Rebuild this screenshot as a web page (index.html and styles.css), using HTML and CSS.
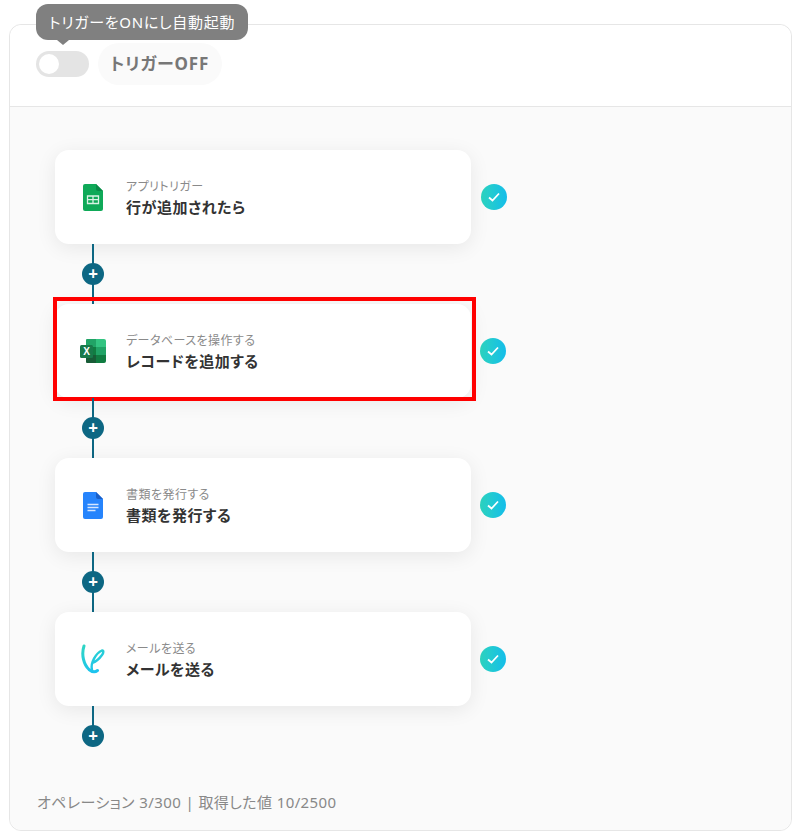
FILE: index.html
```html
<!DOCTYPE html>
<html lang="ja">
<head>
  <meta charset="UTF-8">
  <title>フロー</title>
  <link rel="stylesheet" href="styles.css">
</head>
<body>
  <div class="panel">
    <!-- HEADER -->
    <div class="panel-head">
      <div class="toggle"><span class="knob"></span></div>
      <div class="status">トリガーOFF</div>
      <div class="tooltip">トリガーをONにし自動起動</div>
    </div>

    <!-- FLOW -->
    <div class="panel-body">
      <div class="flow">
        <div class="step step-first">
          <div class="card">
            <div class="app-icon">
              <svg viewBox="0 0 20 27" width="20" height="27">
                <path d="M2 0H13L20 7V25a2 2 0 0 1-2 2H2a2 2 0 0 1-2-2V2a2 2 0 0 1 2-2Z" fill="#0fa958"/>
                <path d="M13 0L20 7H15a2 2 0 0 1-2-2Z" fill="#0a8a48"/>
                <path d="M4.500 12H15.500V19.500H4.500Z" fill="none" stroke="#d9f2e4" stroke-width="1.300"/>
                <path d="M10 12V19.500M4.500 15.700H15.500" stroke="#d9f2e4" stroke-width="1.300"/>
              </svg>
            </div>
            <div class="card-text">
              <div class="card-sub">アプリトリガー</div>
              <div class="card-title">行が追加されたら</div>
            </div>
          </div>
          <svg class="check" viewBox="0 0 26 26" width="26" height="26"><use href="#check"/></svg>
        </div>
        <div class="link"><span class="plus">+</span></div>

        <div class="step">
          <div class="card">
            <div class="app-icon">
              <svg viewBox="0 0 26 24" width="26" height="24">
                <path d="M6 1a1 1 0 0 1 1-1H16V8H6Z" fill="#21a366"/>
                <path d="M16 0H24a2 2 0 0 1 2 2V8H16Z" fill="#33c481"/>
                <path d="M6 8H16V16H6Z" fill="#107c41"/>
                <path d="M16 8H26V16H16Z" fill="#21a366"/>
                <path d="M6 16H16V24H7a1 1 0 0 1-1-1Z" fill="#185c37"/>
                <path d="M16 16H26V22a2 2 0 0 1-2 2H16Z" fill="#107c41"/>
                <rect x="0" y="6" width="13" height="13" rx="1.500" fill="#18794a"/>
                <text class="excel-x" x="6.500" y="16.300" text-anchor="middle">X</text>
              </svg>
            </div>
            <div class="card-text">
              <div class="card-sub">データベースを操作する</div>
              <div class="card-title">レコードを追加する</div>
            </div>
            <div class="highlight"></div>
          </div>
          <svg class="check" viewBox="0 0 26 26" width="26" height="26"><use href="#check"/></svg>
        </div>
        <div class="link"><span class="plus">+</span></div>

        <div class="step">
          <div class="card">
            <div class="app-icon">
              <svg viewBox="0 0 20 27" width="20" height="27">
                <path d="M2 0H13L20 7V25a2 2 0 0 1-2 2H2a2 2 0 0 1-2-2V2a2 2 0 0 1 2-2Z" fill="#2684fc"/>
                <path d="M13 0L20 7H15a2 2 0 0 1-2-2Z" fill="#1a5fc8"/>
                <path d="M4.500 12.500H15.500M4.500 15.500H15.500M4.500 18.500H12.500" stroke="#d5e6ff" stroke-width="1.300"/>
              </svg>
            </div>
            <div class="card-text">
              <div class="card-sub">書類を発行する</div>
              <div class="card-title">書類を発行する</div>
            </div>
          </div>
          <svg class="check" viewBox="0 0 26 26" width="26" height="26"><use href="#check"/></svg>
        </div>
        <div class="link"><span class="plus">+</span></div>

        <div class="step">
          <div class="card">
            <div class="app-icon">
              <svg viewBox="7 4 24 31" width="24" height="31">
                <defs>
                  <linearGradient id="mailGrad" gradientUnits="userSpaceOnUse" x1="9" y1="5" x2="20" y2="33">
                    <stop offset="0" stop-color="#2fd6c3"/>
                    <stop offset="1" stop-color="#1cc3f0"/>
                  </linearGradient>
                </defs>
                <path d="M10 6C7 15 10 25 15 29.500C18 32 21 32.500 23.500 30.500" fill="none" stroke="url(#mailGrad)" stroke-width="3" stroke-linecap="round"/>
                <path d="M18 30C16 23 22 13 28 10.500C30 10 29.500 13 28 15C25.500 18.500 22 21.500 18.500 23" fill="none" stroke="url(#mailGrad)" stroke-width="2.400" stroke-linecap="round"/>
              </svg>
            </div>
            <div class="card-text">
              <div class="card-sub">メールを送る</div>
              <div class="card-title">メールを送る</div>
            </div>
          </div>
          <svg class="check" viewBox="0 0 26 26" width="26" height="26"><use href="#check"/></svg>
        </div>
        <div class="link link-last"><span class="plus">+</span></div>
      </div>

      <div class="usage">オペレーション 3/300 | 取得した値 10/2500</div>
    </div>
  </div>

  <svg class="defs" width="0" height="0">
    <defs>
      <linearGradient id="checkGrad" x1="0" y1="0" x2="1" y2="0">
        <stop offset="0" stop-color="#2dd4bf"/>
        <stop offset="1" stop-color="#14bdea"/>
      </linearGradient>
      <g id="check">
        <circle cx="13" cy="13" r="13" fill="url(#checkGrad)"/>
        <path d="M8 13.500L11.500 16.500L18 9.500" fill="none" stroke="#fff" stroke-width="1.800"/>
      </g>
    </defs>
  </svg>
</body>
</html>
```

FILE: styles.css
```css
* {
  box-sizing: border-box;
}

body {
  margin: 0;
  padding: 24px 9px 8px;
  background-color: #fff;
  font-family: "Noto Sans", "Noto Sans CJK JP", sans-serif;
  font-feature-settings: "palt";
}

.panel {
  border: 1px solid #e6e6e6;
  border-radius: 12px;
  height: 807px;
  display: flex;
  flex-direction: column;
}

.panel-head {
  position: relative;
  height: 82px;
  flex-shrink: 0;
  padding: 18px 0 0 26px;
  display: flex;
  align-items: flex-start;
  background-color: #fff;
  border-bottom: 1px solid #e6e6e6;
  border-radius: 12px 12px 0 0;
}

.toggle {
  width: 53px;
  height: 26px;
  margin-top: 8px;
  border-radius: 13px;
  background-color: #e4e4e4;
  padding: 3px;
}

.knob {
  display: block;
  width: 20px;
  height: 20px;
  border-radius: 50%;
  background-color: #fff;
}

.status {
  margin-left: 9px;
  height: 42px;
  padding: 0 13px 0 12px;
  border-radius: 21px;
  background-color: #fafafa;
  color: #777;
  font-size: 17px;
  font-weight: 700;
  letter-spacing: 0.8px;
  line-height: 42px;
}

.tooltip {
  position: absolute;
  left: 26px;
  top: -21px;
  height: 36px;
  padding: 0 13px;
  border-radius: 12px;
  background-color: #808080;
  color: #fff;
  font-size: 15px;
  letter-spacing: 0.7px;
  line-height: 36px;
}

.tooltip::after {
  content: "";
  position: absolute;
  left: 21px;
  top: 36px;
  border-left: 6px solid transparent;
  border-right: 6px solid transparent;
  border-top: 5px solid #808080;
}

.panel-body {
  flex: 1;
  background-color: #fafafa;
  border-radius: 0 0 12px 12px;
  padding: 43px 0 0 45px;
}

.step {
  display: flex;
  align-items: center;
  gap: 9px;
}

.step-first {
  gap: 10px;
}

.card {
  position: relative;
  width: 416px;
  height: 94px;
  padding-left: 24px;
  display: flex;
  align-items: center;
  background-color: #fff;
  border-radius: 14px;
  box-shadow: 0 4px 20px rgba(0, 0, 0, 0.08);
}

.app-icon {
  width: 28px;
  flex-shrink: 0;
  display: flex;
  justify-content: center;
}

.card-text {
  margin: 2px 0 0 19px;
}

.card-sub {
  color: #8a8a8a;
  font-size: 12px;
  letter-spacing: 0.45px;
  line-height: 18px;
}

.card-title {
  color: #333;
  font-size: 15px;
  font-weight: 700;
  letter-spacing: 0.5px;
  line-height: 22px;
}

.highlight {
  position: absolute;
  left: -2px;
  top: -7px;
  width: 423px;
  height: 104px;
  border: 4px solid #f00;
}

.excel-x {
  fill: #fff;
  font-family: "Liberation Sans", sans-serif;
  font-size: 10px;
  font-weight: 700;
}

.link {
  position: relative;
  width: 76px;
  height: 60px;
  display: flex;
  align-items: center;
  justify-content: center;
}

.link::before {
  content: "";
  position: absolute;
  left: 37px;
  top: 0;
  bottom: 0;
  width: 2px;
  background-color: #0d6783;
}

.link-last::before {
  bottom: 30px;
}

.plus {
  position: relative;
  width: 22px;
  height: 22px;
  border-radius: 50%;
  background-color: #0d6783;
  color: #fff;
  font-size: 17px;
  font-weight: 700;
  line-height: 21px;
  text-align: center;
}

.usage {
  margin: 26px 0 0 -18px;
  color: #888;
  font-size: 15px;
  letter-spacing: 0.4px;
  line-height: 20px;
}

.defs {
  position: absolute;
}
```
